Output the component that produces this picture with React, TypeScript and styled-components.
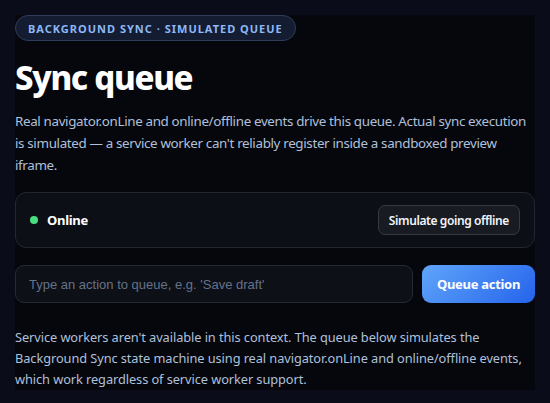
import styled, { createGlobalStyle } from "styled-components";
import { useState } from "react";

const GlobalStyles = createGlobalStyle`
  html, body {
    margin: 0;
    background: #0a0d19;
  }
  body {
    padding: 15px;
    font-family: "Noto Sans", "Open Sans", sans-serif;
    color: #e6ebf5;
  }
`;

const Page = styled.main`
  width: 520px;
  background: #05070d;
  display: flex;
  flex-direction: column;
  align-items: flex-start;
`;

const Badge = styled.div`
  box-sizing: border-box;
  height: 26px;
  padding: 0 12px;
  display: flex;
  align-items: center;
  border: 1px solid #2e3d5a;
  border-radius: 13px;
  background: #141c31;
  color: #8cb8f6;
  font-size: 11px;
  font-weight: 700;
  letter-spacing: 1px;
  text-transform: uppercase;
`;

const Title = styled.h1`
  margin: 17px 0 0;
  font-size: 33px;
  line-height: 40px;
  font-weight: 800;
  color: #ffffff;
  letter-spacing: -1.3px;
`;

const Lead = styled.p<{ $top: number; $small?: boolean }>`
  margin: ${(p) => p.$top}px 0 0;
  font-size: ${(p) => (p.$small ? "12.8px" : "13.4px")};
  line-height: ${(p) => (p.$small ? "21px" : "22px")};
  letter-spacing: ${(p) => (p.$small ? "-0.08px" : "-0.35px")};
  color: #b0c0da;
`;

const StatusCard = styled.section`
  box-sizing: border-box;
  width: 100%;
  margin-top: 16px;
  padding: 12px 14px;
  display: flex;
  align-items: center;
  justify-content: space-between;
  border: 1px solid #22262e;
  border-radius: 11px;
  background: #0c0f15;
`;

const Status = styled.div`
  display: flex;
  align-items: center;
  gap: 9px;
  font-size: 13px;
  font-weight: 700;
  letter-spacing: -0.3px;
  color: #ffffff;
`;

const Dot = styled.span<{ $online: boolean }>`
  width: 8px;
  height: 8px;
  border-radius: 50%;
  background: ${(p) => (p.$online ? "#4ade80" : "#f87171")};
`;

const GhostButton = styled.button`
  box-sizing: border-box;
  height: 30px;
  padding: 0 10px;
  border: 1px solid #353943;
  border-radius: 7px;
  background: #181b22;
  color: #f1f4fa;
  font-family: inherit;
  font-size: 12px;
  font-weight: 600;
  letter-spacing: -0.4px;
  cursor: pointer;
`;

const QueueRow = styled.form`
  width: 100%;
  margin-top: 17px;
  display: flex;
  gap: 9px;
`;

const ActionInput = styled.input`
  box-sizing: border-box;
  flex: 1;
  height: 38px;
  padding: 0 13px;
  border: 1px solid #262a33;
  border-radius: 9px;
  background: #0d1017;
  color: #e6ebf5;
  font-family: "Liberation Sans", Arial, sans-serif;
  font-size: 13px;
  outline: none;

  &::placeholder {
    color: #66728a;
  }
`;

const PrimaryButton = styled.button`
  box-sizing: border-box;
  width: 113px;
  height: 38px;
  border: none;
  border-radius: 9px;
  background: linear-gradient(135deg, #60a5fa, #2563eb);
  color: #ffffff;
  font-family: inherit;
  font-size: 13px;
  font-weight: 700;
  letter-spacing: -0.3px;
  cursor: pointer;
`;

const App = () => {
  const [online, setOnline] = useState(true);
  const [text, setText] = useState("");

  return (
    <>
      <GlobalStyles />
      <Page>
        <Badge>Background Sync · Simulated Queue</Badge>
        <Title>Sync queue</Title>
        <Lead $top={12}>
          Real navigator.onLine and online/offline events drive this queue. Actual sync execution
          is simulated — a service worker can't reliably register inside a sandboxed preview
          iframe.
        </Lead>
        <StatusCard>
          <Status>
            <Dot $online={online} />
            {online ? "Online" : "Offline"}
          </Status>
          <GhostButton onClick={() => setOnline(!online)}>
            {online ? "Simulate going offline" : "Simulate going online"}
          </GhostButton>
        </StatusCard>
        <QueueRow onSubmit={(e) => { e.preventDefault(); setText(""); }}>
          <ActionInput
            value={text}
            onChange={(e) => setText(e.target.value)}
            placeholder="Type an action to queue, e.g. 'Save draft'"
          />
          <PrimaryButton type="submit">Queue action</PrimaryButton>
        </QueueRow>
        <Lead $top={24} $small>
          Service workers aren't available in this context. The queue below simulates the
          Background Sync state machine using real navigator.onLine and online/offline events,
          which work regardless of service worker support.
        </Lead>
      </Page>
    </>
  );
};

export default App;
